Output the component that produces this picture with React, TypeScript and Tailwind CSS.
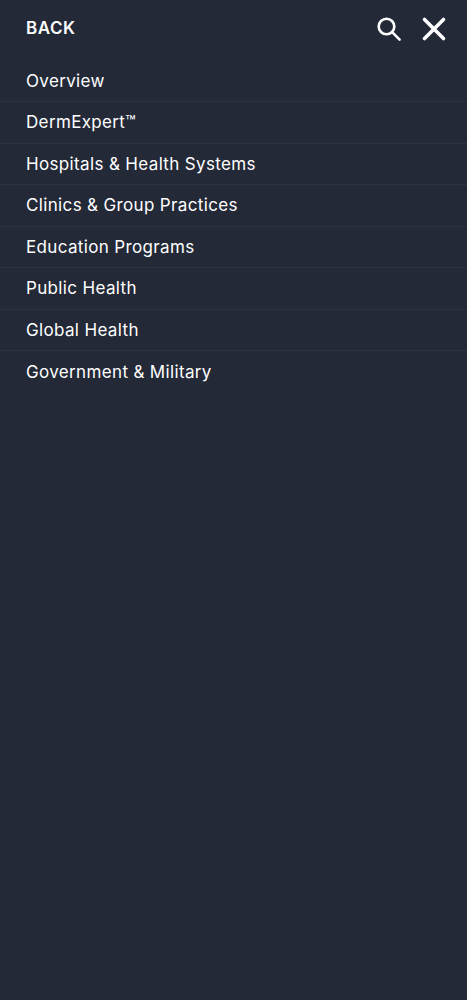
import React from 'react';

const links = [
  'Overview',
  'DermExpert™',
  'Hospitals & Health Systems',
  'Clinics & Group Practices',
  'Education Programs',
  'Public Health',
  'Global Health',
  'Government & Military',
];

export default function App() {
  return (
    <div className="h-[1000px] bg-[#232937] text-white font-['Inter',sans-serif] antialiased overflow-hidden">
      <div className="flex items-center justify-between h-[60px] pb-[2px] pl-[26px] pr-[20px]">
        <span className="text-[17px] font-semibold leading-none tracking-[0.55px] mb-[2px]">BACK</span>
        <div className="flex items-center gap-[19px]">
          <svg width="26" height="26" viewBox="0 0 26 26" fill="none" stroke="white" strokeWidth="2.6" strokeLinecap="round">
            <circle cx="10.5" cy="10.5" r="7.8" />
            <path d="M16.2 16.2L23.6 23.6" />
          </svg>
          <svg width="26" height="26" viewBox="0 0 26 26" fill="none" stroke="white" strokeWidth="3.6" strokeLinecap="round">
            <path d="M3.5 3.5L22.5 22.5M22.5 3.5L3.5 22.5" />
          </svg>
        </div>
      </div>
      <ul className="pt-[0.75px]">
        {links.map((item, i) => (
          <li
            key={item}
            className={`flex items-center h-[41.5px] pl-[26px] text-[17px] font-normal leading-none tracking-[0.35px] ${
              i < links.length - 1 ? 'border-b border-[#2b3240]' : ''
            }`}
          >
            {item}
          </li>
        ))}
      </ul>
    </div>
  );
}
